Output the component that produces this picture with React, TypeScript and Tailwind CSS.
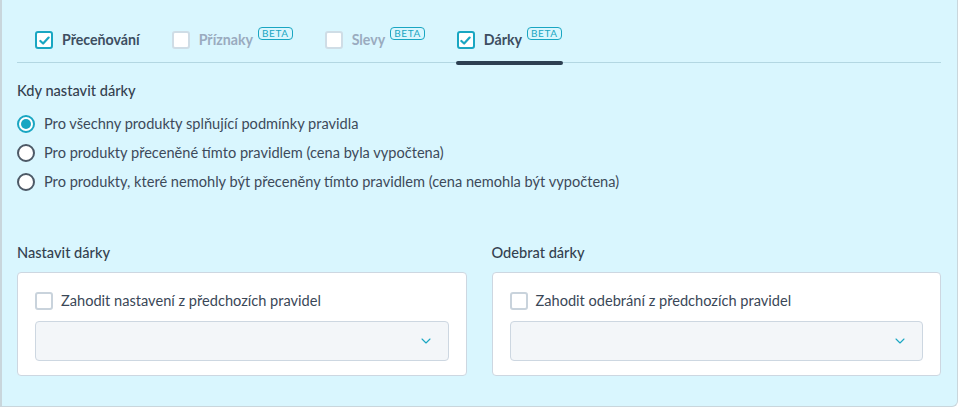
import { ChevronDown } from "lucide-react";

const font = { fontFamily: "Lato, 'Noto Sans', sans-serif" };

function Check({ checked, dim }: { checked?: boolean; dim?: boolean }) {
  if (checked) {
    return (
      <span className="flex h-[18px] w-[18px] shrink-0 items-center justify-center rounded-[3px] border-2 border-[#19a6c2] bg-white">
        <svg viewBox="0 0 12 12" className="h-[11px] w-[11px]">
          <path d="M1.5 6.5 L4.5 9.3 L10.5 2.8" fill="none" stroke="#19a6c2" strokeWidth="2.4" strokeLinecap="round" strokeLinejoin="round" />
        </svg>
      </span>
    );
  }
  return (
    <span
      className={`h-[18px] w-[18px] shrink-0 rounded-[3px] border-2 ${dim ? "border-[#cfdde6]" : "border-[#c9d3dc]"} bg-white`}
    />
  );
}

function Beta() {
  return (
    <span className="ml-[5px] -mt-[14px] rounded-[4px] border border-[#19a6c2] px-[3px] text-[10px] leading-[11px] tracking-[0.6px] text-[#19a6c2]">
      BETA
    </span>
  );
}

function Tab({ label, checked, beta, active }: { label: string; checked?: boolean; beta?: boolean; active?: boolean }) {
  return (
    <div className="relative flex h-[44px] items-center">
      <Check checked={checked} dim={!checked} />
      <span className={`ml-[9px] text-[14.2px] font-bold ${checked ? "text-[#3d4e61]" : "text-[#9aabbf]"}`}>{label}</span>
      {beta && <Beta />}
      {active && <span className="absolute -bottom-[3px] -left-[1px] -right-[1px] h-[4px] rounded-full bg-[#2d3f51]" />}
    </div>
  );
}

function Radio({ label, on }: { label: string; on?: boolean }) {
  return (
    <label className="flex h-[29px] items-center">
      <span
        className={`flex h-[18px] w-[18px] items-center justify-center rounded-full border-2 ${on ? "border-[#19a6c2]" : "border-[#4d5966]"} bg-white`}
      >
        {on && <span className="h-[10px] w-[10px] rounded-full bg-[#19a6c2]" />}
      </span>
      <span className="ml-[9px] text-[14.6px] text-[#3d4a5a]">{label}</span>
    </label>
  );
}

function GiftBox({ title, option }: { title: string; option: string }) {
  return (
    <div className="flex-1">
      <h3 className="text-[14.6px] font-medium text-[#34414f]">{title}</h3>
      <div className="mt-[8px] rounded-[4px] border border-[#cdd7e1] bg-white px-[17px] pb-[14px] pt-[17px]">
        <div className="flex items-center">
          <Check />
          <span className="ml-[8px] text-[14.6px] text-[#3a4757]">{option}</span>
        </div>
        <div className="mt-[9px] flex h-[40px] items-center justify-end rounded-[4px] border border-[#cdd7e1] bg-[#f3f6f9] pr-[14px]">
          <ChevronDown size={16} strokeWidth={1.6} className="text-[#19a6c2]" />
        </div>
      </div>
    </div>
  );
}

export default function App() {
  return (
    <div style={font} className="h-[408px] w-[958px] overflow-hidden">
      <div className="h-[407px] rounded-br-[6px] border-b border-l-2 border-r border-[#c9d6dc] bg-[#d9f6fe] pl-[15px] pr-[16px]">
        <div className="flex gap-[32px] border-b border-[#b3d7e2] pl-[18px] pt-[18px]">
          <Tab label="Přeceňování" checked />
          <Tab label="Příznaky" beta />
          <Tab label="Slevy" beta />
          <Tab label="Dárky" checked beta active />
        </div>

        <div className="pt-[17px]">
          <h3 className="text-[14.6px] font-medium text-[#34414f]">Kdy nastavit dárky</h3>
          <div className="mt-[8px] flex flex-col">
            <Radio label="Pro všechny produkty splňující podmínky pravidla" on />
            <Radio label="Pro produkty přeceněné tímto pravidlem (cena byla vypočtena)" />
            <Radio label="Pro produkty, které nemohly být přeceněny tímto pravidlem (cena nemohla být vypočtena)" />
          </div>
        </div>

        <div className="mt-[45px] flex gap-[25px]">
          <GiftBox title="Nastavit dárky" option="Zahodit nastavení z předchozích pravidel" />
          <GiftBox title="Odebrat dárky" option="Zahodit odebrání z předchozích pravidel" />
        </div>
      </div>
    </div>
  );
}
